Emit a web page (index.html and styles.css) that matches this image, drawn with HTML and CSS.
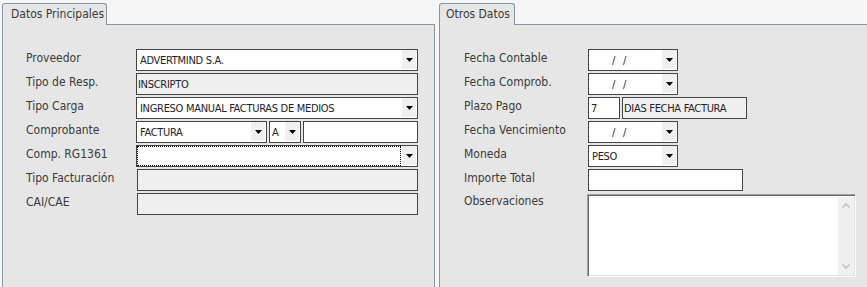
FILE: index.html
```html
<!DOCTYPE html>
<html lang="es">
<head>
    <meta charset="UTF-8">
    <title>Comprobante de Proveedor</title>
    <link rel="stylesheet" href="styles.css">
</head>
<body>
    <div class="panels">
        <section class="panel panel-left">
            <div class="tab-strip">
                <div class="tab tab-main">Datos Principales</div>
                <div class="tab-line"></div>
            </div>
            <div class="panel-body">
                <div class="form form-left">
                    <label>Proveedor</label>
                    <div class="combo">
                        <span class="combo-text">ADVERTMIND S.A.</span>
                        <span class="combo-btn"><svg width="7" height="4" viewBox="0 0 7 4"><polygon points="0,0 7,0 3.5,4" fill="#000"/></svg></span>
                    </div>

                    <label>Tipo de Resp.</label>
                    <div class="box readonly">INSCRIPTO</div>

                    <label>Tipo Carga</label>
                    <div class="combo">
                        <span class="combo-text">INGRESO MANUAL FACTURAS DE MEDIOS</span>
                        <span class="combo-btn"><svg width="7" height="4" viewBox="0 0 7 4"><polygon points="0,0 7,0 3.5,4" fill="#000"/></svg></span>
                    </div>

                    <label>Comprobante</label>
                    <div class="field-group">
                        <div class="combo combo-tipo">
                            <span class="combo-text">FACTURA</span>
                            <span class="combo-btn"><svg width="7" height="4" viewBox="0 0 7 4"><polygon points="0,0 7,0 3.5,4" fill="#000"/></svg></span>
                        </div>
                        <div class="combo combo-letra">
                            <span class="combo-text">A</span>
                            <span class="combo-btn"><svg width="7" height="4" viewBox="0 0 7 4"><polygon points="0,0 7,0 3.5,4" fill="#000"/></svg></span>
                        </div>
                        <div class="box box-numero"></div>
                    </div>

                    <label>Comp. RG1361</label>
                    <div class="combo">
                        <span class="combo-text focused"></span>
                        <span class="combo-btn"><svg width="7" height="4" viewBox="0 0 7 4"><polygon points="0,0 7,0 3.5,4" fill="#000"/></svg></span>
                    </div>

                    <label>Tipo Facturación</label>
                    <div class="box readonly shifted"></div>

                    <label>CAI/CAE</label>
                    <div class="box readonly shifted"></div>
                </div>
            </div>
        </section>

        <section class="panel panel-right">
            <div class="tab-strip">
                <div class="tab tab-other">Otros Datos</div>
                <div class="tab-line"></div>
            </div>
            <div class="panel-body">
                <div class="form form-right">
                    <label>Fecha Contable</label>
                    <div class="combo combo-date">
                        <span class="combo-text date-text">/&nbsp;&nbsp;/</span>
                        <span class="combo-btn"><svg width="7" height="4" viewBox="0 0 7 4"><polygon points="0,0 7,0 3.5,4" fill="#000"/></svg></span>
                    </div>

                    <label>Fecha Comprob.</label>
                    <div class="combo combo-date">
                        <span class="combo-text date-text">/&nbsp;&nbsp;/</span>
                        <span class="combo-btn"><svg width="7" height="4" viewBox="0 0 7 4"><polygon points="0,0 7,0 3.5,4" fill="#000"/></svg></span>
                    </div>

                    <label>Plazo Pago</label>
                    <div class="field-group">
                        <div class="box box-plazo">7</div>
                        <div class="box readonly box-dias">DIAS FECHA FACTURA</div>
                    </div>

                    <label>Fecha Vencimiento</label>
                    <div class="combo combo-date">
                        <span class="combo-text date-text">/&nbsp;&nbsp;/</span>
                        <span class="combo-btn"><svg width="7" height="4" viewBox="0 0 7 4"><polygon points="0,0 7,0 3.5,4" fill="#000"/></svg></span>
                    </div>

                    <label>Moneda</label>
                    <div class="combo combo-date">
                        <span class="combo-text">PESO</span>
                        <span class="combo-btn"><svg width="7" height="4" viewBox="0 0 7 4"><polygon points="0,0 7,0 3.5,4" fill="#000"/></svg></span>
                    </div>

                    <label>Importe Total</label>
                    <div class="box box-importe"></div>

                    <label class="label-top">Observaciones</label>
                    <div class="memo">
                        <div class="memo-text"></div>
                        <div class="memo-scroll">
                            <svg width="8" height="5" viewBox="0 0 8 5"><polyline points="0.5,4.5 4,1 7.5,4.5" fill="none" stroke="#c4c4c4" stroke-width="1.6"/></svg>
                            <svg width="8" height="5" viewBox="0 0 8 5"><polyline points="0.5,0.5 4,4 7.5,0.5" fill="none" stroke="#c4c4c4" stroke-width="1.6"/></svg>
                        </div>
                    </div>
                </div>
            </div>
        </section>
    </div>
</body>
</html>
```

FILE: styles.css
```css
html, body {
    margin: 0;
    padding: 0;
    overflow: hidden;
}
body {
    font-family: "DejaVu Sans Condensed", "DejaVu Sans", sans-serif;
    font-size: 12px;
    color: #3a3a3a;
    background-color: #f6f6f6;
    height: 287px;
}
.panels {
    display: flex;
    gap: 4px;
    padding: 3px 0 0 2px;
}
.panel {
    display: flex;
    flex-direction: column;
}
.panel-left {
    width: 433px;
    flex: none;
}
.panel-right {
    flex: 1;
}
.tab-strip {
    display: flex;
    height: 22px;
}
.tab {
    box-sizing: border-box;
    height: 22px;
    background: #e6e6e6;
    border: 1px solid #8696a0;
    border-bottom: none;
    border-radius: 3px 3px 0 0;
    line-height: 20px;
    white-space: nowrap;
}
.tab-main {
    width: 105px;
    padding-left: 8px;
}
.tab-other {
    width: 76px;
    padding-left: 6px;
}
.tab-line {
    flex: 1;
    border-bottom: 1px solid #8696a0;
}
.panel-body {
    box-sizing: border-box;
    height: 262px;
    background: #e6e6e6;
    border-left: 1px solid #8696a0;
}
.panel-left .panel-body {
    border-right: 1px solid #8696a0;
    padding: 24px 0 0 23px;
}
.panel-right .panel-body {
    padding: 24px 0 0 24px;
}
.form {
    display: grid;
    row-gap: 2px;
}
.form-left {
    grid-template-columns: 110px 282px;
}
.form-right {
    grid-template-columns: 124px auto;
    justify-items: start;
}
.form label {
    line-height: 19px;
    white-space: nowrap;
}
.form .label-top {
    line-height: 17px;
}
.box, .combo {
    box-sizing: border-box;
    height: 22px;
    background: #fff;
    border: 1px solid #444;
    color: #22222c;
    font-size: 11px;
    letter-spacing: -0.3px;
    white-space: nowrap;
}
.box {
    line-height: 21px;
    padding-left: 2px;
}
.readonly {
    background: #f0f0f0;
    padding-left: 1px;
}
.shifted {
    margin-left: 1px;
}
.combo {
    display: flex;
}
.combo-text {
    flex: 1;
    line-height: 21px;
    padding-left: 3px;
    overflow: hidden;
}
.combo-text.focused {
    box-sizing: border-box;
    margin: 0 1px 0 0;
    border: 1px dotted #000;
}
.combo-btn {
    width: 14px;
    margin: 0 1px 1px 0;
    background: #f0f0f0;
    display: flex;
    align-items: center;
    justify-content: center;
}
.field-group {
    display: flex;
    gap: 2px;
}
.combo-tipo {
    width: 131px;
}
.combo-letra {
    width: 32px;
}
.combo-letra .combo-text {
    padding-left: 2px;
}
.box-numero {
    width: 115px;
}
.combo-date {
    width: 90px;
}
.date-text {
    padding-left: 23px;
    letter-spacing: 0.5px;
}
.box-plazo {
    width: 32px;
}
.box-dias {
    width: 125px;
    padding-left: 1px;
}
.box-importe {
    width: 155px;
}
.memo {
    box-sizing: border-box;
    display: flex;
    width: 269px;
    height: 83px;
    margin: 1px 0 0 -1px;
    background: #fff;
    border-top: 1px solid #a0a0a0;
    border-left: 1px solid #a0a0a0;
    border-right: 1px solid #fff;
    border-bottom: 1px solid #fff;
    box-shadow: inset 1px 1px 0 #696969, inset -1px -1px 0 #e3e3e3;
}
.memo-text {
    flex: 1;
}
.memo-scroll {
    width: 16px;
    margin: 2px 1px 1px 0;
    background: #f0f0f0;
    display: flex;
    flex-direction: column;
    align-items: center;
    justify-content: space-between;
    padding: 6px 0 6px;
}
```
